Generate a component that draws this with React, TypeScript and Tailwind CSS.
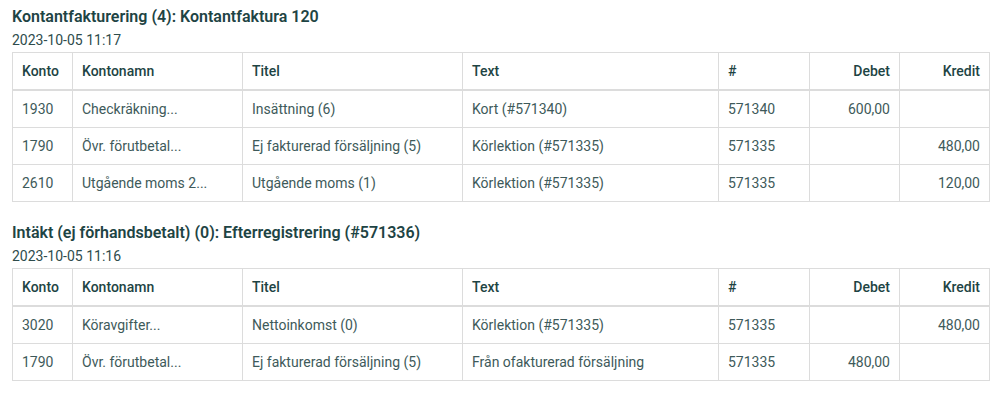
import React from 'react'

type Row = { konto: string; namn: string; titel: string; text: string; nr: string; debet: string; kredit: string }

const sections: { title: string; date: string; rows: Row[] }[] = [
  {
    title: 'Kontantfakturering (4): Kontantfaktura 120',
    date: '2023-10-05 11:17',
    rows: [
      { konto: '1930', namn: 'Checkräkning...', titel: 'Insättning (6)', text: 'Kort (#571340)', nr: '571340', debet: '600,00', kredit: '' },
      { konto: '1790', namn: 'Övr. förutbetal...', titel: 'Ej fakturerad försäljning (5)', text: 'Körlektion (#571335)', nr: '571335', debet: '', kredit: '480,00' },
      { konto: '2610', namn: 'Utgående moms 2...', titel: 'Utgående moms (1)', text: 'Körlektion (#571335)', nr: '571335', debet: '', kredit: '120,00' },
    ],
  },
  {
    title: 'Intäkt (ej förhandsbetalt) (0): Efterregistrering (#571336)',
    date: '2023-10-05 11:16',
    rows: [
      { konto: '3020', namn: 'Köravgifter...', titel: 'Nettoinkomst (0)', text: 'Körlektion (#571335)', nr: '571335', debet: '', kredit: '480,00' },
      { konto: '1790', namn: 'Övr. förutbetal...', titel: 'Ej fakturerad försäljning (5)', text: 'Från ofakturerad försäljning', nr: '571335', debet: '480,00', kredit: '' },
    ],
  },
]

const th = 'border border-[#dcdcdc] border-b-2 px-[9px] py-[8px] text-[14px] leading-[20px] font-medium text-[#1e4444]'
const td = 'border border-[#dcdcdc] px-[9px] py-[8px] text-[14px] leading-[20px] text-[#3e5a5a]'

export default function App() {
  return (
    <div className="bg-white w-[999px] h-[401px] px-3 pt-[7px]" style={{ fontFamily: 'Roboto, "Liberation Sans", sans-serif' }}>
      {sections.map((s, i) => (
        <section key={s.title} className={i > 0 ? 'mt-[21px]' : ''}>
          <h2 className="text-[16px] leading-[20px] font-semibold text-[#1e4444]">{s.title}</h2>
          <div className="mt-[3px] text-[14px] leading-[20px] text-[#2e4c4c]">{s.date}</div>
          <table className="mt-[2px] w-[977px] border-collapse table-fixed">
            <colgroup>
              <col className="w-[60px]" />
              <col className="w-[170px]" />
              <col className="w-[220px]" />
              <col className="w-[256px]" />
              <col className="w-[91px]" />
              <col className="w-[90px]" />
              <col className="w-[90px]" />
            </colgroup>
            <thead>
              <tr>
                <th className={`${th} text-left`}>Konto</th>
                <th className={`${th} text-left`}>Kontonamn</th>
                <th className={`${th} text-left`}>Titel</th>
                <th className={`${th} text-left`}>Text</th>
                <th className={`${th} text-left`}>#</th>
                <th className={`${th} text-right`}>Debet</th>
                <th className={`${th} text-right`}>Kredit</th>
              </tr>
            </thead>
            <tbody>
              {s.rows.map((r, j) => (
                <tr key={j}>
                  <td className={td}>{r.konto}</td>
                  <td className={td}>{r.namn}</td>
                  <td className={td}>{r.titel}</td>
                  <td className={td}>{r.text}</td>
                  <td className={td}>{r.nr}</td>
                  <td className={`${td} text-right`}>{r.debet}</td>
                  <td className={`${td} text-right`}>{r.kredit}</td>
                </tr>
              ))}
            </tbody>
          </table>
        </section>
      ))}
    </div>
  )
}
